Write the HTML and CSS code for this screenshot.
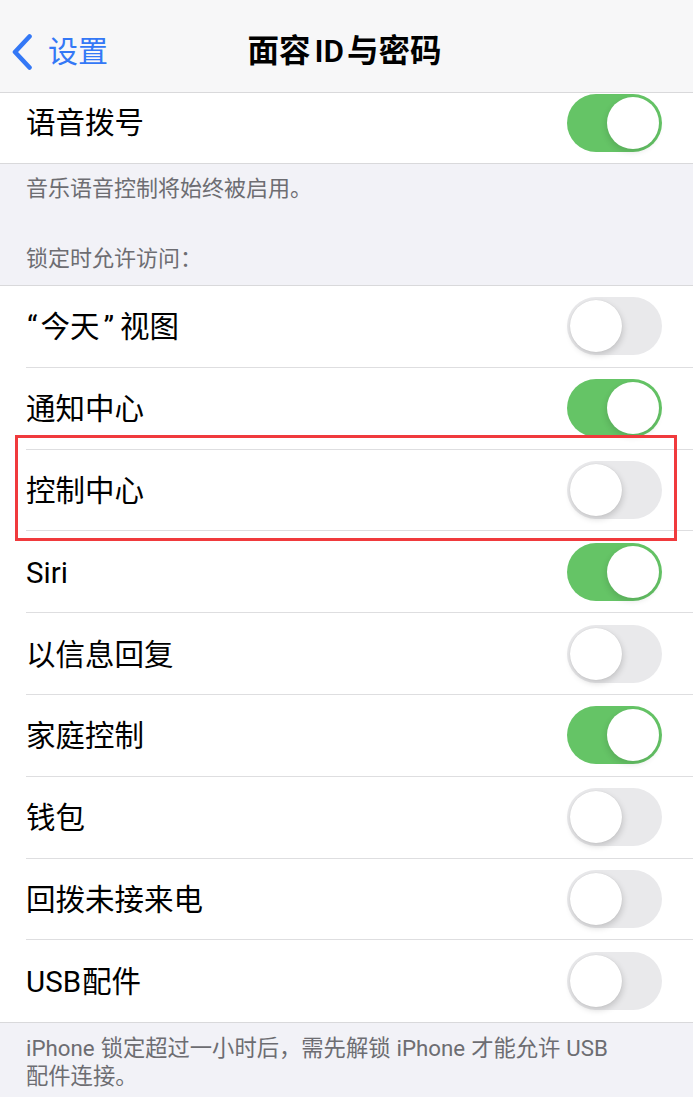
FILE: index.html
```html
<!DOCTYPE html>
<html lang="zh-CN">
<head>
<meta charset="utf-8">
<title>面容ID与密码</title>
<link rel="stylesheet" href="styles.css">
</head>
<body>
<div class="screen">
  <header class="nav">
    <div class="back">
      <svg class="chev" width="22" height="36" viewBox="0 0 22 36"><path d="M18.5 2.5 L4 18 L18.5 33.5" fill="none" stroke="#3478f6" stroke-width="4.6" stroke-linecap="round" stroke-linejoin="round"/></svg>
      <span class="back-text">设置</span>
    </div>
    <div class="title">面容<span class="latin">ID</span>与密码</div>
    <div></div>
  </header>

  <div class="group">
    <div class="row row-first"><span class="label">语音拨号</span><span class="toggle on"></span></div>
  </div>
  <div class="note">音乐语音控制将始终被启用。</div>
  <div class="section-head">锁定时允许访问：</div>

  <div class="group">
    <div class="row"><span class="label"><span class="q q-open">“</span>今天<span class="q q-close">”</span>视图</span><span class="toggle"></span></div>
    <div class="row"><span class="label">通知中心</span><span class="toggle on"></span></div>
    <div class="row"><span class="label">控制中心</span><span class="toggle"></span></div>
    <div class="row"><span class="label">Siri</span><span class="toggle on"></span></div>
    <div class="row"><span class="label">以信息回复</span><span class="toggle"></span></div>
    <div class="row"><span class="label">家庭控制</span><span class="toggle on"></span></div>
    <div class="row"><span class="label">钱包</span><span class="toggle"></span></div>
    <div class="row"><span class="label">回拨未接来电</span><span class="toggle"></span></div>
    <div class="row"><span class="label">USB<span class="gap"></span>配件</span><span class="toggle"></span></div>
  </div>
  <div class="note note-bottom">iPhone<span class="gap-s"></span>锁定超过一小时后，需先解锁<span class="gap-s"></span>iPhone<span class="gap-s"></span>才能允许<span class="gap-s"></span>USB<br>配件连接。</div>

  <div class="highlight"></div>
</div>
</body>
</html>
```

FILE: styles.css
```css
* { box-sizing: border-box; }
html, body { margin: 0; padding: 0; }
body {
  background: #f2f2f7;
  font-family: Roboto, "Noto Sans CJK SC", sans-serif;
  color: #000;
}
.screen {
  position: relative;
  width: 693px;
  min-height: 1097px;
  overflow: hidden;
}
.nav {
  height: 93px;
  background: #f7f7f8;
  border-bottom: 1px solid #d9d9db;
  display: grid;
  grid-template-columns: 1fr auto 1fr;
  align-items: center;
  padding-top: 12px;
}
.back {
  display: flex;
  align-items: center;
  padding-left: 11px;
  gap: 15px;
}
.chev { display: block; }
.back-text {
  color: #3478f6;
  font-size: 30px;
  line-height: 36px;
}
.title {
  font-size: 31.5px;
  font-weight: 600;
  line-height: 40px;
  margin-left: -4px;
}
.title .latin { margin: 0 3px 0 4px; }
.group {
  background: #fff;
  border-bottom: 1px solid #d9d9db;
}
.row {
  height: 81.8px;
  margin-left: 26px;
  padding-right: 31px;
  padding-top: 2px;
  display: flex;
  align-items: center;
  justify-content: space-between;
  border-bottom: 1px solid #dedee0;
}
.row .toggle { margin-top: -2px; }
.row:last-child { border-bottom: none; }
.row-first {
  height: 70px;
  padding-top: 0;
  padding-bottom: 11px;
}
.row-first .toggle { margin-top: 0; }
.label {
  font-size: 29.5px;
  line-height: 36px;
}
.q { display: inline-block; }
.q-open { margin-right: 3px; margin-left: 1px; }
.q-close { margin: 0 6px 0 4px; }
.gap { display: inline-block; width: 1px; }
.gap-s { display: inline-block; width: 6px; }
.toggle {
  position: relative;
  width: 95px;
  height: 58px;
  border-radius: 29px;
  background: #e9e9eb;
  flex: none;
}
.toggle::after {
  content: "";
  position: absolute;
  top: 3px;
  left: 3px;
  width: 52px;
  height: 52px;
  border-radius: 50%;
  background: #fff;
  box-shadow: 1px 3px 6px rgba(0,0,0,0.16), 0 0 1px rgba(0,0,0,0.12);
}
.toggle.on { background: #65c466; }
.toggle.on::after { left: 40px; box-shadow: -1px 3px 6px rgba(0,0,0,0.12); }
.note {
  color: #6d6d72;
  font-size: 22px;
  line-height: 28px;
  padding: 11px 26px 0;
  height: 60px;
}
.section-head {
  color: #6d6d72;
  font-size: 22px;
  line-height: 28px;
  padding: 21px 26px 0;
  height: 62px;
  border-bottom: 1px solid #d9d9db;
}
.note-bottom {
  padding-top: 11px;
  height: auto;
  font-size: 22.3px;
}
.highlight {
  position: absolute;
  left: 15px;
  top: 435px;
  width: 662px;
  height: 106px;
  border: 3px solid #f03a3d;
  pointer-events: none;
}
```
